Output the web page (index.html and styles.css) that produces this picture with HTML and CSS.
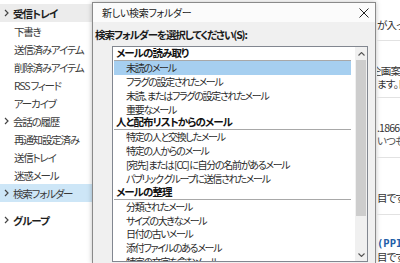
FILE: index.html
```html
<!DOCTYPE html>
<html lang="ja">

<head>
    <meta charset="UTF-8">
    <meta name="viewport" content="width=device-width, initial-scale=1.0">
    <title>新しい検索フォルダー</title>
    <link rel="stylesheet" href="styles.css">
</head>

<body>
    <div class="app">
        <!-- Folder pane -->
        <nav class="folders">
            <div class="folder open top current">
                <svg class="chev" viewBox="0 0 5 8"><polyline points="1,1 4,4 1,7" /></svg>受信トレイ
            </div>
            <div class="folder">下書き</div>
            <div class="folder">送信済みアイテム</div>
            <div class="folder">削除済みアイテム</div>
            <div class="folder">RSS フィード</div>
            <div class="folder">アーカイブ</div>
            <div class="folder open">
                <svg class="chev" viewBox="0 0 5 8"><polyline points="1,1 4,4 1,7" /></svg>会話の履歴
            </div>
            <div class="folder">再通知設定済み</div>
            <div class="folder">送信トレイ</div>
            <div class="folder">迷惑メール</div>
            <div class="folder open selected">
                <svg class="chev" viewBox="0 0 5 8"><polyline points="1,1 4,4 1,7" /></svg>検索フォルダー
            </div>
            <div class="folder open top group">
                <svg class="chev" viewBox="0 0 5 8"><polyline points="1,1 4,4 1,7" /></svg>グループ
            </div>
        </nav>

        <!-- New search folder dialog -->
        <div class="dialog">
            <div class="title-bar">
                <span class="title">新しい検索フォルダー</span>
                <svg class="close" viewBox="0 0 10 10"><path d="M0.5 0.5 L9.5 9.5 M9.5 0.5 L0.5 9.5" /></svg>
            </div>
            <div class="dialog-body">
                <div class="prompt">検索フォルダーを選択してください(S):</div>
                <div class="listbox">
                    <ul class="list">
                        <li class="group-head">メールの読み取り</li>
                        <li class="item sel">未読のメール</li>
                        <li class="item">フラグの設定されたメール</li>
                        <li class="item">未読、またはフラグの設定されたメール</li>
                        <li class="item">重要なメール</li>
                        <li class="group-head">人と配布リストからのメール</li>
                        <li class="item">特定の人と交換したメール</li>
                        <li class="item">特定の人からのメール</li>
                        <li class="item">[宛先] または [CC] に自分の名前があるメール</li>
                        <li class="item">パブリック グループに送信されたメール</li>
                        <li class="group-head">メールの整理</li>
                        <li class="item">分類されたメール</li>
                        <li class="item">サイズの大きなメール</li>
                        <li class="item">日付の古いメール</li>
                        <li class="item">添付ファイルのあるメール</li>
                        <li class="item">特定の文字を含むメール</li>
                    </ul>
                    <div class="scrollbar">
                        <div class="arrow">
                            <svg viewBox="0 0 7 4"><polyline points="0.5,3.5 3.5,0.5 6.5,3.5" /></svg>
                        </div>
                        <div class="track">
                            <div class="thumb"></div>
                        </div>
                        <div class="arrow">
                            <svg viewBox="0 0 7 4"><polyline points="0.5,0.5 3.5,3.5 6.5,0.5" /></svg>
                        </div>
                    </div>
                </div>
            </div>
        </div>

        <!-- Reading pane edge -->
        <div class="reading">
            <div class="msg msg-1">
                <div class="line">が入っている</div>
            </div>
            <div class="msg msg-2">
                <div class="line cut">企画案の</div>
                <div class="line">ます。日</div>
            </div>
            <div class="msg msg-3">
                <div class="line">.1866</div>
                <div class="line muted">いつもお</div>
            </div>
            <div class="msg msg-4">
                <div class="line">目です。</div>
            </div>
            <div class="msg msg-5">
                <div class="line code">(PPIH</div>
                <div class="line">目です。</div>
            </div>
        </div>
    </div>
</body>

</html>
```

FILE: styles.css
```css
* {
    margin: 0;
    padding: 0;
    box-sizing: border-box;
}

html,
body {
    width: 400px;
    height: 263px;
    overflow: hidden;
    background: #fff;
    color: #222;
    font-family: 'Noto Sans CJK JP', 'Noto Sans', sans-serif;
    font-feature-settings: "palt";
}

.app {
    display: flex;
    height: 263px;
}

/* Folder pane */

.folders {
    width: 92px;
    flex: none;
    padding-top: 4px;
    font-size: 10.5px;
    color: #3a3a3a;
    letter-spacing: -1.2px;
}

.folder {
    height: 18px;
    display: flex;
    align-items: center;
    padding-left: 14px;
    white-space: nowrap;
}

.folder.open {
    padding-left: 4px;
}

.folder.top {
    font-weight: bold;
    color: #1e1e1e;
    letter-spacing: -0.9px;
}

.folder.current {
    background: #ececec;
}

.folder.selected {
    background: #cde6f7;
}

.folder.group {
    margin-top: 9px;
}

.chev {
    width: 5px;
    height: 8px;
    margin-right: 4px;
    flex: none;
    fill: none;
    stroke: #444;
    stroke-width: 1.2;
}

/* Dialog */

.dialog {
    width: 284px;
    flex: none;
    margin-top: 2px;
    display: flex;
    flex-direction: column;
    background: #f0f0f0;
    border: 1px solid #8a8a8a;
    border-bottom: none;
    box-shadow: 0 0 5px rgba(0, 0, 0, 0.25);
}

.title-bar {
    height: 19px;
    flex: none;
    display: flex;
    align-items: center;
    justify-content: space-between;
    padding: 0 6px 0 9px;
    background: #fbfbfb;
    font-size: 10px;
    color: #222;
    letter-spacing: -0.3px;
}

.close {
    width: 10px;
    height: 10px;
    fill: none;
    stroke: #222;
    stroke-width: 1;
}

.dialog-body {
    flex: 1;
    padding: 6px 0 0 2px;
}

.prompt {
    height: 14px;
    line-height: 14px;
    font-size: 10.5px;
    font-weight: bold;
    color: #1a1a1a;
    letter-spacing: -1.1px;
    white-space: nowrap;
}

.listbox {
    display: flex;
    width: 256px;
    height: 216px;
    margin: 4px 0 0 17px;
    background: #fff;
    border: 1px solid #828790;
}

.list {
    flex: 1;
    list-style: none;
    padding: 0 4px 0 1px;
    font-size: 10px;
    color: #2a2a2a;
    letter-spacing: -1.3px;
    overflow: hidden;
    white-space: nowrap;
}

.group-head {
    height: 14px;
    line-height: 12px;
    padding-left: 2px;
    font-size: 10.5px;
    font-weight: bold;
    color: #111;
    letter-spacing: -0.9px;
    border-bottom: 1px solid #a8a8a8;
}

.item {
    height: 13.85px;
    line-height: 13.85px;
    padding-left: 12px;
}

.item.sel {
    background: #a6cff0;
}

.scrollbar {
    width: 12px;
    flex: none;
    display: flex;
    flex-direction: column;
    background: #f0f0f0;
}

.arrow {
    height: 13px;
    flex: none;
    display: flex;
    align-items: center;
    justify-content: center;
}

.arrow svg {
    width: 7px;
    height: 4px;
    fill: none;
    stroke: #555;
    stroke-width: 1.1;
}

.track {
    flex: 1;
    padding: 0 1px;
}

.thumb {
    height: 156px;
    background: #cdcdcd;
}

/* Reading pane */

.reading {
    flex: 1;
    margin-left: 1px;
    overflow: hidden;
    font-size: 10.5px;
    color: #333;
    white-space: nowrap;
    letter-spacing: -0.8px;
}

.msg {
    border-bottom: 1px solid #e2e2e2;
}

.msg-1 {
    height: 41px;
    padding-top: 18px;
}

.msg-2 {
    height: 57px;
    padding-top: 23px;
}

.msg-3 {
    height: 60px;
    padding-top: 23px;
}

.msg-4 {
    height: 57px;
    padding-top: 33px;
}

.msg-5 {
    border-bottom: none;
    padding-top: 22px;
}

.line {
    line-height: 13px;
}

.line.cut {
    margin-left: -6px;
}

.line.muted {
    color: #555;
}

.line.code {
    font-family: 'DejaVu Sans Mono', monospace;
    font-weight: bold;
    color: #1f5fa8;
    letter-spacing: 0;
}
```
